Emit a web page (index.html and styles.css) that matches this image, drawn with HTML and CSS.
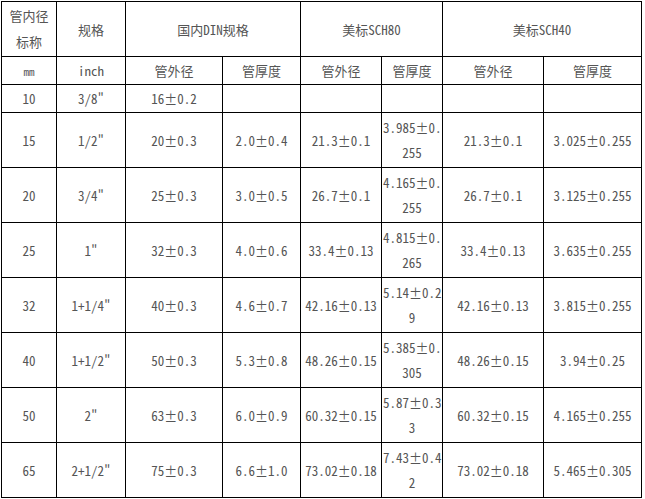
FILE: index.html
```html
<!DOCTYPE html>
<html lang="zh-CN">
<head>
<meta charset="utf-8">
<title>管材规格</title>
<link rel="stylesheet" href="styles.css">
</head>
<body>
<table class="spec">
  <colgroup>
    <col class="c1"><col class="c2"><col class="c3"><col class="c4"><col class="c5"><col class="c6"><col class="c7"><col class="c8">
  </colgroup>
  <tr class="h1">
    <td class="two">管内径<br>标称</td>
    <td>规格</td>
    <td colspan="2">国内DIN规格</td>
    <td colspan="2">美标SCH80</td>
    <td colspan="2">美标SCH40</td>
  </tr>
  <tr class="h2">
    <td class="mm">mm</td>
    <td>inch</td>
    <td>管外径</td>
    <td>管厚度</td>
    <td>管外径</td>
    <td>管厚度</td>
    <td>管外径</td>
    <td>管厚度</td>
  </tr>
  <tr class="h2">
    <td>10</td>
    <td>3/8"</td>
    <td>16±0.2</td>
    <td></td><td></td><td></td><td></td><td></td>
  </tr>
  <tr class="d">
    <td>15</td><td>1/2"</td><td>20±0.3</td><td>2.0±0.4</td><td>21.3±0.1</td>
    <td class="wrap"><span class="first">3.985±0.</span><span class="second">255</span></td>
    <td>21.3±0.1</td><td>3.025±0.255</td>
  </tr>
  <tr class="d">
    <td>20</td><td>3/4"</td><td>25±0.3</td><td>3.0±0.5</td><td>26.7±0.1</td>
    <td class="wrap"><span class="first">4.165±0.</span><span class="second">255</span></td>
    <td>26.7±0.1</td><td>3.125±0.255</td>
  </tr>
  <tr class="d">
    <td>25</td><td>1"</td><td>32±0.3</td><td>4.0±0.6</td><td>33.4±0.13</td>
    <td class="wrap"><span class="first">4.815±0.</span><span class="second">265</span></td>
    <td>33.4±0.13</td><td>3.635±0.255</td>
  </tr>
  <tr class="d">
    <td>32</td><td>1+1/4"</td><td>40±0.3</td><td>4.6±0.7</td><td>42.16±0.13</td>
    <td class="wrap"><span class="first">5.14±0.2</span><span class="second">9</span></td>
    <td>42.16±0.13</td><td>3.815±0.255</td>
  </tr>
  <tr class="d">
    <td>40</td><td>1+1/2"</td><td>50±0.3</td><td>5.3±0.8</td><td>48.26±0.15</td>
    <td class="wrap"><span class="first">5.385±0.</span><span class="second">305</span></td>
    <td>48.26±0.15</td><td>3.94±0.25</td>
  </tr>
  <tr class="d">
    <td>50</td><td>2"</td><td>63±0.3</td><td>6.0±0.9</td><td>60.32±0.15</td>
    <td class="wrap"><span class="first">5.87±0.3</span><span class="second">3</span></td>
    <td>60.32±0.15</td><td>4.165±0.255</td>
  </tr>
  <tr class="d">
    <td>65</td><td>2+1/2"</td><td>75±0.3</td><td>6.6±1.0</td><td>73.02±0.18</td>
    <td class="wrap"><span class="first">7.43±0.4</span><span class="second">2</span></td>
    <td>73.02±0.18</td><td>5.465±0.305</td>
  </tr>
</table>
</body>
</html>
```
FILE: styles.css
```css
html, body {
  margin: 0;
  padding: 0;
  background: #ffffff;
}
body {
  padding: 1px 0 0 1px;
}
.spec {
  border-collapse: collapse;
  table-layout: fixed;
  width: 641px;
  font-family: "Noto Sans Mono CJK SC", "Liberation Mono", "Noto Sans CJK SC", monospace;
  font-size: 13px;
  color: #555555;
}
.c1 { width: 55px; }
.c2 { width: 69px; }
.c3 { width: 97px; }
.c4 { width: 78px; }
.c5 { width: 81px; }
.c6 { width: 61px; }
.c7 { width: 101px; }
.c8 { width: 98px; }
.spec td {
  border: 1px solid #000;
  padding: 0 1px;
  text-align: center;
  vertical-align: middle;
  line-height: 25px;
  white-space: nowrap;
  overflow: hidden;
}
.h1 td { height: 54px; }
.h1 td.two { line-height: 26px; }
.h2 td { height: 27px; line-height: 18px; }
.d td { height: 54px; }
.mm { font-size: 11px; }
.wrap .first {
  display: block;
  text-align: left;
}
.wrap .second {
  display: block;
  text-align: center;
}
```
